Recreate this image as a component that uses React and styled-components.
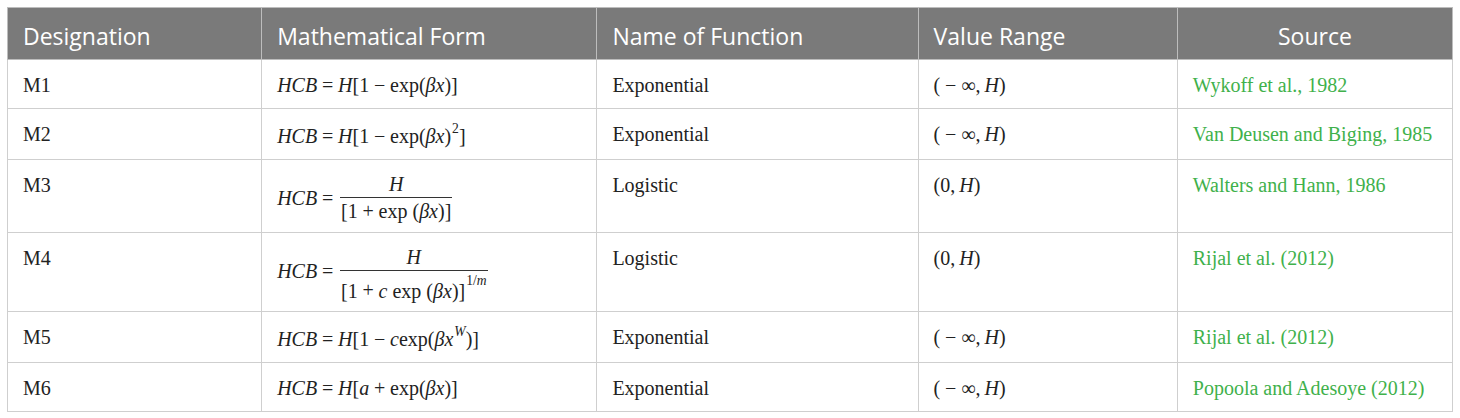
import React from "react";
import styled, { createGlobalStyle } from "styled-components";

const GlobalStyle = createGlobalStyle`
  body {
    margin: 0;
    background: #fff;
  }
`;

const Page = styled.div`
  padding: 7px 8px 0 7px;
`;

const Table = styled.table`
  width: 1446px;
  table-layout: fixed;
  border-collapse: collapse;
  border: 1px solid #cfcfcf;
`;

const Th = styled.th`
  background: #7a7a7a;
  color: #fff;
  font-family: "Open Sans", sans-serif;
  font-size: 23px;
  font-weight: 400;
  line-height: 30px;
  text-align: ${({ center }) => (center ? "center" : "left")};
  padding: 13px 15px 8px 15px;
  border: 1px solid #bdbdbd;
  white-space: nowrap;
`;

const Td = styled.td`
  font-family: "Liberation Serif", serif;
  font-size: 20px;
  line-height: 24px;
  color: #222;
  vertical-align: top;
  padding: 13px 15px 11px 15px;
  border: 1px solid #cfcfcf;
  white-space: nowrap;
`;

const SourceCell = styled(Td)`
  color: #3fb14b;
`;

const MathText = styled.span`
  white-space: nowrap;
`;

const V = styled.i`
  font-style: italic;
`;

const Op = styled.span`
  margin: 0 0.24em;
`;

const Frac = styled.span`
  display: inline-flex;
  flex-direction: column;
  align-items: center;
  vertical-align: 14px;
  margin-left: 2px;
`;

const Num = styled.span`
  line-height: 22px;
  padding-bottom: 2px;
`;

const Bar = styled.span`
  align-self: stretch;
  height: 1px;
  background: #333;
`;

const Den = styled.span`
  line-height: 20px;
  padding: 3px 1px 0 1px;
`;

const Sup = styled.sup`
  font-size: 0.68em;
  line-height: 1;
  vertical-align: ${({ raise }) => raise || "0.72em"};
  margin-left: 1px;
`;

const Lhs = () => (
  <>
    <V>HCB</V>
    <Op>=</Op>
  </>
);

const NegRange = () => (
  <MathText>
    (<Op>−</Op>∞,&#8201;<V>H</V>)
  </MathText>
);

const ZeroRange = () => (
  <MathText>
    (0,&#8201;<V>H</V>)
  </MathText>
);

const rows = [
  {
    id: "M1",
    form: (
      <MathText>
        <Lhs />
        <V>H</V>[1<Op>−</Op>exp(<V>βx</V>)]
      </MathText>
    ),
    name: "Exponential",
    range: <NegRange />,
    source: "Wykoff et al., 1982",
  },
  {
    id: "M2",
    form: (
      <MathText>
        <Lhs />
        <V>H</V>[1<Op>−</Op>exp(<V>βx</V>)<Sup>2</Sup>]
      </MathText>
    ),
    name: "Exponential",
    range: <NegRange />,
    source: "Van Deusen and Biging, 1985",
  },
  {
    id: "M3",
    form: (
      <MathText>
        <Lhs />
        <Frac>
          <Num>
            <V>H</V>
          </Num>
          <Bar />
          <Den>
            [1<Op>+</Op>exp (<V>βx</V>)]
          </Den>
        </Frac>
      </MathText>
    ),
    name: "Logistic",
    range: <ZeroRange />,
    source: "Walters and Hann, 1986",
  },
  {
    id: "M4",
    form: (
      <MathText>
        <Lhs />
        <Frac>
          <Num>
            <V>H</V>
          </Num>
          <Bar />
          <Den>
            [1<Op>+</Op>
            <V>c</V> exp (<V>βx</V>)]
            <Sup raise="0.93em">
              1/<V>m</V>
            </Sup>
          </Den>
        </Frac>
      </MathText>
    ),
    name: "Logistic",
    range: <ZeroRange />,
    source: "Rijal et al. (2012)",
  },
  {
    id: "M5",
    form: (
      <MathText>
        <Lhs />
        <V>H</V>[1<Op>−</Op>
        <V>c</V>exp(<V>βx</V>
        <Sup>
          <V>W</V>
        </Sup>
        )]
      </MathText>
    ),
    name: "Exponential",
    range: <NegRange />,
    source: "Rijal et al. (2012)",
  },
  {
    id: "M6",
    form: (
      <MathText>
        <Lhs />
        <V>H</V>[<V>a</V>
        <Op>+</Op>exp(<V>βx</V>)]
      </MathText>
    ),
    name: "Exponential",
    range: <NegRange />,
    source: "Popoola and Adesoye (2012)",
  },
];

const App = () => {
  return (
    <Page>
      <GlobalStyle />
      <Table>
        <colgroup>
          <col style={{ width: 254 }} />
          <col style={{ width: 335 }} />
          <col style={{ width: 321 }} />
          <col style={{ width: 259 }} />
          <col style={{ width: 275 }} />
        </colgroup>
        <thead>
          <tr>
            <Th>Designation</Th>
            <Th>Mathematical Form</Th>
            <Th>Name of Function</Th>
            <Th>Value Range</Th>
            <Th center>Source</Th>
          </tr>
        </thead>
        <tbody>
          {rows.map((r) => (
            <tr key={r.id}>
              <Td>{r.id}</Td>
              <Td>{r.form}</Td>
              <Td>{r.name}</Td>
              <Td>{r.range}</Td>
              <SourceCell>{r.source}</SourceCell>
            </tr>
          ))}
        </tbody>
      </Table>
    </Page>
  );
};

export default App;
